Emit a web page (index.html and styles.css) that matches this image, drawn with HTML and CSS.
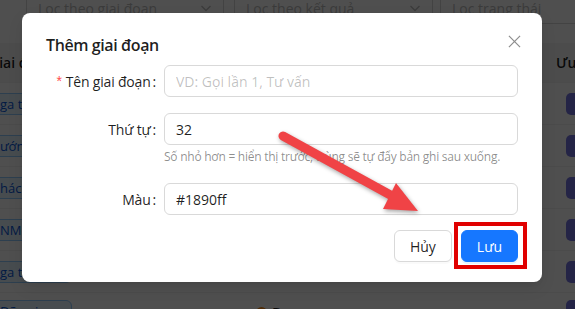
FILE: index.html
```html
<!DOCTYPE html>
<html lang="vi">
<head>
<meta charset="utf-8">
<title>Thêm giai đoạn</title>
<link rel="stylesheet" href="styles.css">
</head>
<body>
<div class="page">
  <div class="filters">
    <div class="select s1"><span>Lọc theo giai đoạn</span><svg class="chev" viewBox="0 0 12 12"><path d="M1.5 4 L6 8.5 L10.5 4"/></svg></div>
    <div class="select s2"><span>Lọc theo kết quả</span><svg class="chev" viewBox="0 0 12 12"><path d="M1.5 4 L6 8.5 L10.5 4"/></svg></div>
    <div class="select s3"><span>Lọc trạng thái</span><svg class="chev" viewBox="0 0 12 12"><path d="M1.5 4 L6 8.5 L10.5 4"/></svg></div>
  </div>
  <div class="tbl">
    <div class="row head"><div class="cell">Giai đoạn</div><div class="cell">Kết quả</div><div class="cell">Ưu tiên</div></div>
    <div class="row"><div class="cell"><span class="tag">ga tư vấn</span></div><div class="cell"></div><div class="cell"><span class="pill"></span></div></div>
    <div class="row"><div class="cell"><span class="tag">ướng dẫn</span></div><div class="cell"></div><div class="cell"><span class="pill"></span></div></div>
    <div class="row"><div class="cell"><span class="tag">hách hàng</span></div><div class="cell"></div><div class="cell"><span class="pill"></span></div></div>
    <div class="row"><div class="cell"><span class="tag">NM mới</span></div><div class="cell"></div><div class="cell"><span class="pill"></span></div></div>
    <div class="row"><div class="cell"><span class="tag">ga thử</span></div><div class="cell"></div><div class="cell"><span class="pill"></span></div></div>
    <div class="row top"><div class="cell"><span class="tag">Đã gọi</span></div><div class="cell"><span class="status"><span class="dot"></span>Đang</span></div><div class="cell"><span class="pill"></span></div></div>
  </div>
</div>

<div class="mask"></div>

<div class="modal">
  <button class="close" aria-label="Đóng"><svg viewBox="0 0 14 14"><path d="M1 1 L13 13 M13 1 L1 13"/></svg></button>
  <div class="modal-title">Thêm giai đoạn</div>
  <form class="form">
    <div class="form-item">
      <label class="label req">Tên giai đoạn</label>
      <div class="control"><input class="input" type="text" placeholder="VD: Gọi lần 1, Tư vấn"></div>
    </div>
    <div class="form-item with-help">
      <label class="label">Thứ tự</label>
      <div class="control">
        <input class="input" type="text" value="32">
        <div class="help">Số nhỏ hơn = hiển thị trước, trùng sẽ tự đẩy bản ghi sau xuống.</div>
      </div>
    </div>
    <div class="form-item last">
      <label class="label">Màu</label>
      <div class="control"><input class="input" type="text" value="#1890ff"></div>
    </div>
    <div class="footer">
      <button type="button" class="btn">Hủy</button>
      <button type="button" class="btn primary">Lưu</button>
    </div>
  </form>
</div>

<div class="annot-box"></div>
<svg class="annot-arrow" viewBox="0 0 575 309" width="575" height="309">
  <line x1="283" y1="136" x2="394" y2="197" class="shaft"/>
  <polygon points="396,183 383,209 418,211" class="head"/>
</svg>
</body>
</html>
```

FILE: styles.css
```css
* { box-sizing: border-box; }

html, body {
  margin: 0;
  width: 575px;
  height: 309px;
  overflow: hidden;
}

body {
  position: relative;
  background: #fff;
  font-family: "Open Sans", "Noto Sans", sans-serif;
  font-size: 14px;
  color: rgba(0, 0, 0, 0.88);
}

/* ---------- background page ---------- */
.page {
  margin-top: -8px;
}

.filters {
  display: flex;
  gap: 10px;
  padding-left: 26px;
  margin-bottom: 19px;
}

.select {
  height: 32px;
  border: 1px solid #d9d9d9;
  border-radius: 6px;
  padding: 0 11px;
  display: flex;
  align-items: center;
  justify-content: space-between;
  color: #bfbfbf;
  flex: none;
}
.s1 { width: 198px; }
.s2 { width: 199px; }
.s3 { width: 200px; margin-left: -3px; }

.chev {
  width: 12px;
  height: 12px;
  fill: none;
  stroke: #bfbfbf;
  stroke-width: 1.3;
}

.tbl {
  margin-left: -27px;
  width: 642px;
}

.row {
  display: grid;
  grid-template-columns: 140px 1fr 75px;
  align-items: center;
  height: 42px;
  border-bottom: 1px solid #f0f0f0;
}
.row.head {
  height: 40px;
  background: #f5f5f5;
  font-weight: 600;
}
.row.top {
  align-items: start;
  padding-top: 7px;
}

.cell {
  padding: 0 16px;
  white-space: nowrap;
  overflow: hidden;
}
.row .cell:first-child { padding-left: 19px; }
.row.head .cell:first-child { padding-left: 16px; }

.tag {
  display: inline-block;
  height: 22px;
  line-height: 20px;
  padding: 0 7px;
  font-size: 13px;
  color: #0958d9;
  background: #e6f4ff;
  border: 1px solid #91caff;
  border-radius: 6px;
  min-width: 80px;
}

.pill {
  display: block;
  width: 40px;
  height: 22px;
  margin-left: 10px;
  border-radius: 5px;
  background: #7674e0;
}

.status {
  display: inline-flex;
  align-items: center;
  gap: 5px;
  margin-left: 127px;
  margin-top: 3px;
  font-weight: 600;
}
.dot {
  width: 11px;
  height: 11px;
  border-radius: 50%;
  border: 2px solid #fa8c16;
}

.mask {
  position: absolute;
  inset: 0;
  background: rgba(0, 0, 0, 0.69);
}

/* ---------- modal ---------- */
.modal {
  position: absolute;
  left: 22px;
  top: 13px;
  width: 520px;
  padding: 20px 24px;
  background: #fff;
  border-radius: 8px;
  box-shadow: 0 6px 16px rgba(0, 0, 0, 0.08), 0 3px 6px -4px rgba(0, 0, 0, 0.12);
}

.modal-title {
  font-size: 16px;
  font-weight: 600;
  line-height: 24px;
  margin-bottom: 8px;
  letter-spacing: -0.4px;
}

.close {
  position: absolute;
  top: 17px;
  right: 17px;
  width: 22px;
  height: 22px;
  padding: 0;
  border: 0;
  background: transparent;
  display: flex;
  align-items: center;
  justify-content: center;
}
.close svg {
  width: 13px;
  height: 13px;
  fill: none;
  stroke: rgba(0, 0, 0, 0.45);
  stroke-width: 1.3;
}

.form-item {
  display: flex;
  margin-bottom: 16px;
}
.form-item.with-help { margin-bottom: 15px; }
.form-item.last { margin-bottom: 15px; }

.label {
  width: 118px;
  flex: none;
  height: 32px;
  display: flex;
  align-items: center;
  justify-content: flex-end;
  white-space: nowrap;
  letter-spacing: -0.2px;
}
.label::after {
  content: ":";
  margin: 0 8px 0 2px;
}
.label.req::before {
  content: "*";
  color: #ff4d4f;
  margin-right: 4px;
  font-family: "Liberation Sans", sans-serif;
  font-size: 14px;
}

.control {
  flex: 1;
  min-width: 0;
}

.input {
  display: block;
  width: 100%;
  height: 32px;
  padding: 4px 11px;
  border: 1px solid #d9d9d9;
  border-radius: 6px;
  font: inherit;
  color: rgba(0, 0, 0, 0.88);
  background: #fff;
  outline: none;
}
.input::placeholder { color: rgba(0, 0, 0, 0.25); }

.help {
  color: rgba(0, 0, 0, 0.45);
  font-size: 12px;
  letter-spacing: -0.25px;
  line-height: 22px;
  padding-top: 1px;
  white-space: nowrap;
}

.footer {
  display: flex;
  justify-content: flex-end;
  gap: 9px;
}

.btn {
  height: 32px;
  padding: 4px 15px;
  border: 1px solid #d9d9d9;
  border-radius: 6px;
  background: #fff;
  font: inherit;
  color: rgba(0, 0, 0, 0.88);
  box-shadow: 0 2px 0 rgba(0, 0, 0, 0.02);
}
.btn.primary {
  background: #1677ff;
  border-color: #1677ff;
  color: #fff;
  box-shadow: 0 2px 0 rgba(5, 145, 255, 0.1);
}

/* ---------- annotations ---------- */
.annot-box {
  position: absolute;
  left: 454px;
  top: 222px;
  width: 73px;
  height: 47px;
  border: 4px solid #e00000;
}

.annot-arrow {
  position: absolute;
  left: 0;
  top: 0;
  filter: drop-shadow(1px 2px 2px rgba(0, 0, 0, 0.35));
}
.annot-arrow .shaft {
  stroke: #f04346;
  stroke-width: 9;
  stroke-linecap: round;
}
.annot-arrow .head {
  fill: #f04346;
}
```
